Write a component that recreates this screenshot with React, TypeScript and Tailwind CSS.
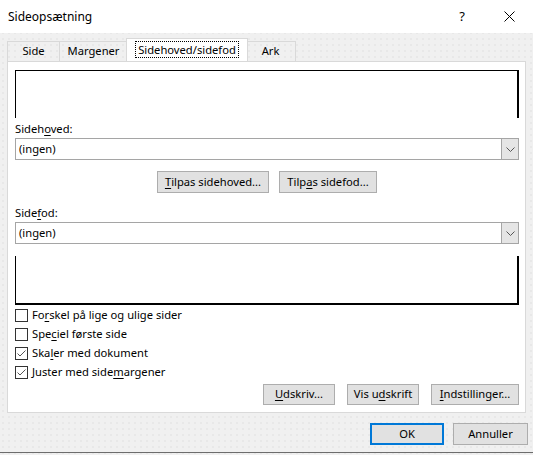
import React from 'react';

const font = { fontFamily: '"Segoe UI", "Noto Sans", "Liberation Sans", sans-serif' };

// underline one access-key letter
const Key: React.FC<{ children: React.ReactNode }> = ({ children }) => (
  <span className="underline underline-offset-2">{children}</span>
);

const Tab: React.FC<{ label: string; w: string; selected?: boolean }> = ({ label, w, selected }) => {
  if (selected) {
    return (
      <div className={`${w} relative z-10 -mx-[2px] mt-[-2px] h-[23px] bg-white border border-b-0 border-[#d9d9d9] flex items-start justify-center pt-[2px]`}>
        <span className="border border-dotted border-black px-[2px] leading-[15px]">{label}</span>
      </div>
    );
  }
  return (
    <div className={`${w} h-[20px] border border-b-0 border-[#d9d9d9] -ml-px first:ml-0 flex items-center justify-center`}>
      {label}
    </div>
  );
};

const Combo: React.FC = () => (
  <div className="h-[22px] w-[504px] border border-[#a5a5a5] bg-white flex items-stretch">
    <div className="flex-1 pl-[3px] flex items-center">(ingen)</div>
    <div className="w-[17px] bg-[#e5e5e5] border-l border-[#a5a5a5] flex items-center justify-center">
      <svg width="9" height="5" viewBox="0 0 9 5">
        <path d="M0.5 0.5 L4.5 4.5 L8.5 0.5" fill="none" stroke="#555" strokeWidth="1" />
      </svg>
    </div>
  </div>
);

const Btn: React.FC<{ w: string; h?: string; children: React.ReactNode; focus?: boolean }> = ({ w, h = 'h-[22px]', children, focus }) => (
  <div
    className={`${w} ${h} ${focus ? 'border-2 border-[#0078d7]' : 'border border-[#adadad]'} bg-[#e1e1e1] flex items-center justify-center`}
  >
    {children}
  </div>
);

const Check: React.FC<{ checked?: boolean; children: React.ReactNode }> = ({ checked, children }) => (
  <div className="h-[19px] flex items-center">
    <div className="w-[13px] h-[13px] border border-[#333] bg-white flex items-center justify-center">
      {checked && (
        <svg width="11" height="11" viewBox="0 0 11 11">
          <path d="M1.5 5.5 L4 8 L9.5 2.5" fill="none" stroke="#555" strokeWidth="1" />
        </svg>
      )}
    </div>
    <span className="ml-[4px]">{children}</span>
  </div>
);

export default function App() {
  return (
    <div
      className="w-[533px] h-[455px] bg-[#f0f0f0] text-[11.2px] text-black overflow-hidden flex flex-col bg-[radial-gradient(#dedede_0.6px,transparent_0.8px)] bg-[length:6px_6px]"
      style={font}
    >
      {/* title bar */}
      <div className="h-[33px] bg-white flex items-center pl-[8px] shrink-0 text-[12px]">
        <span className="flex-1">Sideopsætning</span>
        <span className="w-[20px] text-center text-[13px] mr-[32px]">?</span>
        <svg width="11" height="11" viewBox="0 0 11 11" className="mr-[18px]">
          <path d="M0.5 0.5 L10.5 10.5 M10.5 0.5 L0.5 10.5" stroke="#000" strokeWidth="1" />
        </svg>
      </div>

      {/* tabs */}
      <div className="mt-[8px] pl-[7px] flex items-end h-[20px] shrink-0">
        <Tab label="Side" w="w-[53px]" />
        <Tab label="Margener" w="w-[69px]" />
        <Tab label="Sidehoved/sidefod" w="w-[122px]" selected />
        <Tab label="Ark" w="w-[51px]" />
      </div>

      {/* panel */}
      <div className="ml-[7px] w-[519px] h-[352px] bg-white border border-[#d9d9d9] shrink-0 pl-[7px] flex flex-col">
        {/* header preview */}
        <div className="mt-[8px] h-[48px] w-[504px] border-t border-l border-r-2 border-black" />
        <div className="mt-[3px] h-[16px] leading-[16px]">
          Sideh<Key>o</Key>ved:
        </div>
        <div className="mt-[1px]">
          <Combo />
        </div>
        <div className="mt-[11px] w-[504px] flex justify-center gap-[10px]">
          <Btn w="w-[112px]">
            <span><Key>T</Key>ilpas sidehoved...</span>
          </Btn>
          <Btn w="w-[98px]">
            <span>Tilp<Key>a</Key>s sidefod...</span>
          </Btn>
        </div>
        <div className="mt-[12px] h-[16px] leading-[16px]">
          Side<Key>f</Key>od:
        </div>
        <div className="mt-[1px]">
          <Combo />
        </div>
        {/* footer preview */}
        <div className="mt-[12px] h-[49px] w-[504px] border-l border-b-2 border-r-2 border-black" />
        <div className="mt-[1px] flex flex-col">
          <Check>Fo<Key>r</Key>skel på lige og ulige sider</Check>
          <Check>Spe<Key>c</Key>iel første side</Check>
          <Check checked>Ska<Key>l</Key>er med dokument</Check>
          <Check checked>Juster med side<Key>m</Key>argener</Check>
        </div>
        <div className="mt-[2px] w-[504px] flex justify-end gap-[12px]">
          <Btn w="w-[72px]" h="h-[21px]">
            <span><Key>U</Key>dskriv...</span>
          </Btn>
          <Btn w="w-[72px]" h="h-[21px]">
            <span>Vis u<Key>d</Key>skrift</span>
          </Btn>
          <Btn w="w-[88px]" h="h-[21px]">
            <span><Key>I</Key>ndstillinger...</span>
          </Btn>
        </div>
      </div>

      {/* dialog buttons */}
      <div className="mt-[10px] flex justify-end gap-[9px] pr-[5px] shrink-0">
        <Btn w="w-[74px]" focus>
          OK
        </Btn>
        <Btn w="w-[75px]">Annuller</Btn>
      </div>
      <div className="mt-[7px] h-px bg-[#6d6d6d] shrink-0" />
    </div>
  );
}
